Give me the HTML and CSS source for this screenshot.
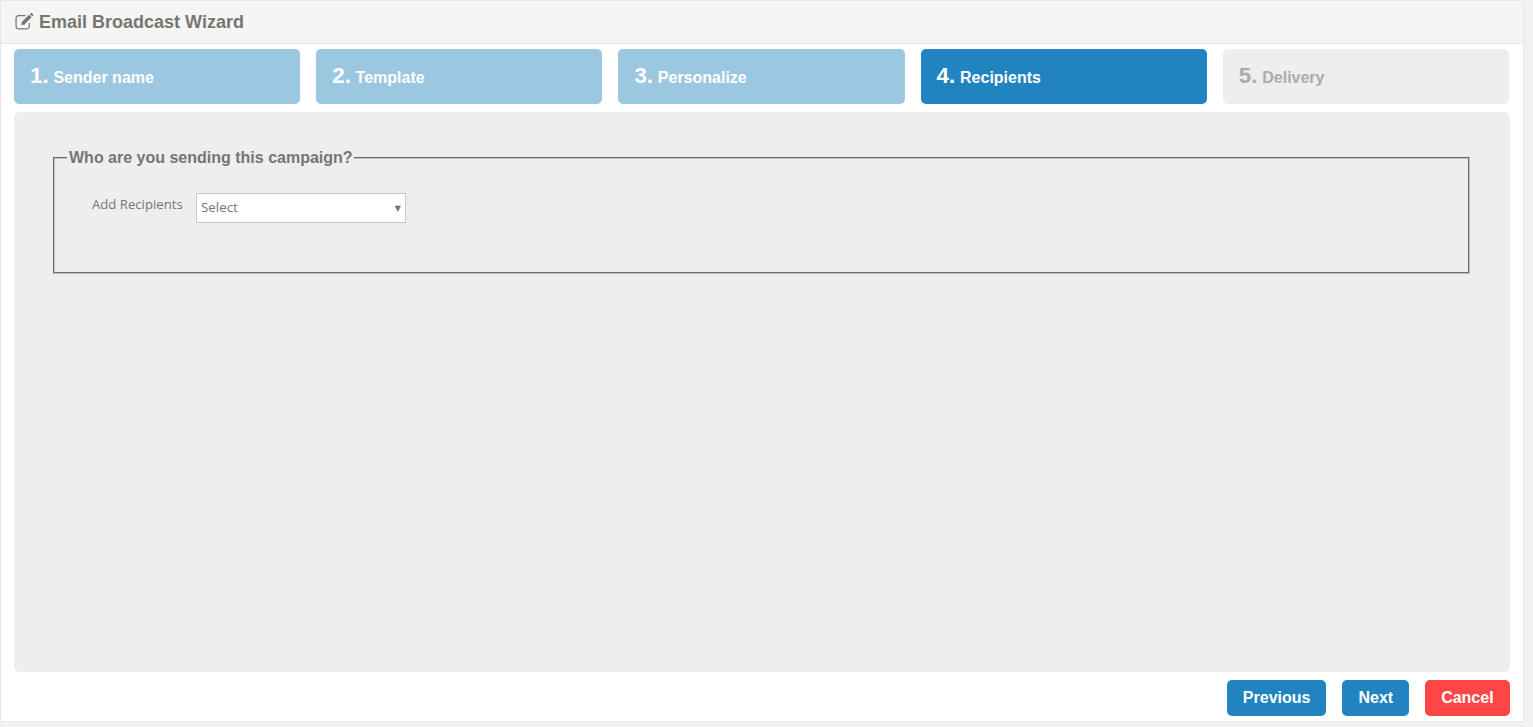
FILE: index.html
```html
<!DOCTYPE html>
<html lang="en">
<head>
<meta charset="utf-8">
<title>Email Broadcast Wizard</title>
<link rel="stylesheet" href="styles.css">
</head>
<body>
<main class="panel">
  <header class="panel-head">
    <svg class="edit-icon" viewBox="0 0 20 16" width="21" height="17" aria-hidden="true">
      <path class="edit-box" d="M13.6 9.5V12.6A2.4 2.4 0 0 1 11.2 15H3.4A2.4 2.4 0 0 1 1 12.6V4.8A2.4 2.4 0 0 1 3.4 2.4H10"/>
      <path class="edit-pen" d="M6.4 8.4 13.4 1.6 15.8 4 8.8 11 6 11.4Z"/>
      <path class="edit-pen" d="M14.2 .9 15.2 .1C15.6 -.1 16 0 16.3 .3L17.2 1.2C17.6 1.6 17.6 2 17.2 2.4L16.5 3.2Z"/>
    </svg>
    <h1 class="panel-title">Email Broadcast Wizard</h1>
  </header>
  <ol class="steps">
    <li class="step step-done"><span class="step-num">1.</span> Sender name</li>
    <li class="step step-done"><span class="step-num">2.</span> Template</li>
    <li class="step step-done"><span class="step-num">3.</span> Personalize</li>
    <li class="step step-active"><span class="step-num">4.</span> Recipients</li>
    <li class="step step-todo"><span class="step-num">5.</span> Delivery</li>
  </ol>
  <section class="content">
    <fieldset class="group">
      <legend class="group-title">Who are you sending this campaign?</legend>
      <div class="field">
        <label class="field-label">Add Recipients</label>
        <div class="select"><span class="select-value">Select</span><span class="select-arrow">▼</span></div>
      </div>
    </fieldset>
  </section>
  <footer class="actions">
    <button class="btn btn-blue">Previous</button>
    <button class="btn btn-blue">Next</button>
    <button class="btn btn-red">Cancel</button>
  </footer>
</main>
</body>
</html>
```
FILE: styles.css
```css
* { box-sizing: border-box; }
html, body { height: 100%; }
body {
  margin: 0;
  background: #f1f1f1;
  font-family: "Liberation Sans", Arial, sans-serif;
  color: #777570;
  overflow: hidden;
}
.panel {
  width: 1524px;
  height: 722px;
  background: #fff;
  border: 1px solid #e7e7e7;
  display: flex;
  flex-direction: column;
}
.panel-head {
  height: 43px;
  flex: none;
  background: #f5f5f5;
  border-bottom: 1px solid #e7e7e7;
  display: flex;
  align-items: center;
  gap: 3px;
  padding-left: 14px;
}
.edit-icon { flex: none; overflow: visible; margin-top: -2px; }
.edit-box { fill: none; stroke: #777570; stroke-width: 1.2; }
.edit-pen { fill: #777570; }
.panel-title { margin: 0; font-size: 18px; font-weight: 700; line-height: 1; color: #777570; }
.steps {
  list-style: none;
  margin: 5px 0 0;
  padding: 0 14px 0 13px;
  display: grid;
  grid-template-columns: repeat(5, 1fr);
  gap: 16px;
  flex: none;
}
.step {
  height: 55px;
  border-radius: 5px;
  padding-left: 16px;
  display: block;
  line-height: 53px;
  font-size: 16px;
  font-weight: 700;
  color: #fff;
  white-space: pre;
}
.step-num { font-size: 22.4px; margin-right: 0.3px; }
.step-done { background: #9cc7e1; }
.step-active { background: #2184c0; }
.step-todo { background: #eeeeee; color: #adaba8; }
.content {
  flex: none;
  height: 560px;
  margin: 8px 13px 0;
  background: #eeeeee;
  border-radius: 6px;
  padding: 37px 40px 37px 39px;
}
.group {
  margin: 0;
  padding: 0;
  height: 125px;
  border: 2px groove #c0c0c0;
  display: block;
}
.group-title {
  margin-left: 12px;
  padding: 0 1px 0 2px;
  font-size: 16px;
  font-weight: 700;
  color: #777570;
}
.field { display: flex; align-items: flex-start; margin-top: 26px; padding-left: 37px; }
.field-label {
  font-family: "Open Sans", sans-serif;
  font-size: 13.15px;
  line-height: 22px;
  width: 104px;
  color: #777570;
}
.select {
  width: 210px;
  height: 30px;
  background: #fff;
  border: 1px solid #c8c8c8;
  display: flex;
  align-items: center;
  justify-content: space-between;
  padding: 0 4px;
  font-family: "Open Sans", sans-serif;
  font-size: 13.33px;
  color: #777570;
}
.select-value { margin-top: -2px; }
.select-arrow { font-family: "DejaVu Sans", sans-serif; font-size: 8px; }
.actions {
  display: flex;
  justify-content: flex-end;
  gap: 16px;
  margin-top: 8px;
  padding-right: 13.4px;
}
.btn {
  height: 36px;
  border: 0;
  border-radius: 5px;
  padding: 0 16px;
  font-family: "Liberation Sans", Arial, sans-serif;
  font-size: 16px;
  font-weight: 700;
  color: #fff;
}
.btn-blue { background: #2184c0; }
.btn-red { background: #ff4646; }
```
